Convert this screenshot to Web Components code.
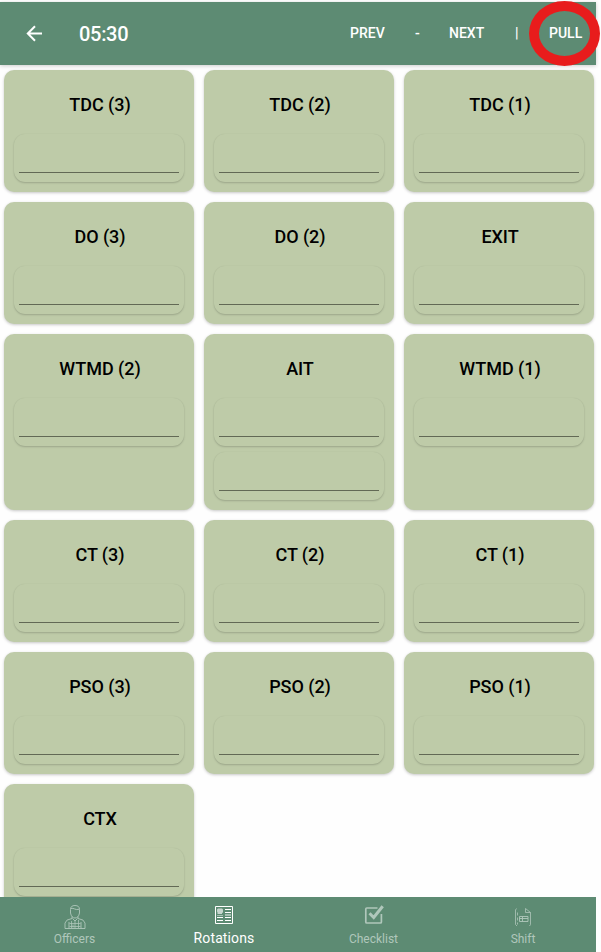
<!DOCTYPE html>
<html lang="en">
<head>
<meta charset="utf-8">
<title>Rotations</title>
<style>
html,body{margin:0;height:100%;overflow:hidden;background:#fefefe;font-family:Roboto,"Liberation Sans",sans-serif}
</style>
</head>
<body>
<rotation-app></rotation-app>
<script>
const define = (name, html, setup) => customElements.define(name, class extends HTMLElement {
  constructor() {
    super();
    this.attachShadow({mode: 'open'}).innerHTML = html;
  }
  connectedCallback() { if (setup) setup(this, this.shadowRoot); }
});

define('app-header', `<style>
:host{display:flex;align-items:center;box-sizing:border-box;height:63px;width:596px;padding-left:24px;background:#5d8b73;color:#fff;box-shadow:0 1px 4px #0003;position:relative;z-index:2;font-weight:500}
.back{width:20px;height:20px;display:block}
.time{font-size:20px;line-height:24px;margin-left:35px;width:271px;padding-top:1px;letter-spacing:-.3px}
nav{display:flex;font-size:14px;line-height:20px;padding-bottom:1px}
.prev{width:65px}.dash{width:34px}.next{width:66px}.bar{width:34px}
.pull{position:relative}
.ring{position:absolute;left:-20px;top:-22px;width:71px;height:65px;box-sizing:border-box;border:10px solid #e81c1c;border-radius:50%}
</style>
<svg class="back" viewBox="0 0 20 20" fill="none" stroke="#fff" stroke-width="2"><path d="M18 9.5H4M11 2.3 3.8 9.5 11 16.7"/></svg>
<span class="time">05:30</span>
<nav><span class="prev">PREV</span><span class="dash">-</span><span class="next">NEXT</span><span class="bar">|</span><span class="pull">PULL<i class="ring"></i></span></nav>`);

define('officer-field', `<style>
:host{display:block;box-sizing:border-box;height:48px;padding:38px 5px 0;border-radius:11px;background:#beCBa8;box-shadow:0 1px 2px #0000002e,0 0 1px #00000010}
div{height:1px;background:#626955}
</style><div></div>`);

define('rotation-card', `<style>
:host{display:flex;flex-direction:column;gap:6px;box-sizing:border-box;padding:0 10px 10px;border-radius:10px;background:#beCBa8;box-shadow:0 1px 3px #00000038}
h2{margin:0 0 -6px;height:64px;box-sizing:border-box;padding:24px 0 0 2px;font-size:18px;line-height:22px;font-weight:500;text-align:center;color:#000;letter-spacing:-.05px}
</style><h2><slot></slot></h2>`, (el, root) => {
  const count = Number(el.getAttribute('fields') || 1);
  for (let i = 0; i < count; i++) root.append(document.createElement('officer-field'));
});

define('rotation-grid', `<style>
:host{display:grid;grid-template-columns:repeat(3,190px);gap:10px;align-content:start;padding:5px 4px;flex:1;min-height:0;overflow:hidden}
</style><slot></slot>`);

const icons = {
  officers: `<path stroke-width=".9" d="M7.5 9V5.5Q7.5 1.5 12 1.5T16.5 5.5V9Q15.5 14 12 14T7.5 9M8 4.5c3-1 4 2 8 .8M9 12.5v2l-5 1.6-2 3V24.5h20V19.100l-2-3-5-1.600v-2M9.500 14.500 12 17l2.500-2.500M6 18v6.500M18 18v6.500"/><path stroke-width="1" opacity=".75" d="M6.500 19.500h11M6.500 22.500h11M8.500 17v7M12 17v7M15.500 16v8M10 20.500v3"/>`,
  rotations: `<path d="M3.500 2.500h17v17h-17z"/><path d="M13 5.500h6M13 8.500h6M5 13.500h6M13 13.500h6M5 16.500h6M13 16.500h6"/><path opacity=".45" d="M13 10.500h6M13 11.500h6M5 11.500h6"/><path opacity=".65" fill="currentColor" stroke="none" d="M6 4.500h4l1 1v3l-1 .5v1H5.500V8.500L5 7.500v-2z"/>`,
  checklist: `<path stroke-width="1.7" d="M15.5 4H4.800Q3.800 4 3.800 5v13q0 1 1 1h13.600q1 0 1-1v-8"/><path stroke-width="3" d="m7.500 9.300 4.200 4.200 9-11.200"/>`,
  shift: `<path stroke-width=".8" d="M6.500 4.500 5.500 6v14.500l1.500 1.500M15.500 4.500l5 4V20.500l-1 1.500M15.500 4.500v4h5"/><path stroke-width=".8" stroke-dasharray="3 2" d="M7.500 8.500v12"/><path stroke-width=".9" d="M9.500 12.500h8.500v5H9.500zM9.500 14.500H18M12.500 12.500v5"/>`
};
define('nav-item', `<style>
:host{display:flex;flex-direction:column;align-items:center;width:150px;flex:none;padding-top:7px;box-sizing:border-box;color:#b0c7bb;font-size:12px;line-height:16px}
:host([active]){color:#fff;font-size:14px}
:host([active]) span{letter-spacing:.13px}
svg{display:block;width:24px;height:24px;margin-bottom:3px;overflow:visible}
:host([icon=shift]) svg{width:26px;padding-right:2px;box-sizing:border-box}
:host([active]) svg{margin-bottom:2px}
</style><svg viewBox="0 0 24 24" fill="none" stroke="currentColor"></svg><span><slot></slot></span>`, (el, root) => {
  root.querySelector('svg').innerHTML = icons[el.getAttribute('icon')];
});
define('bottom-nav', `<style>
:host{display:flex;width:596px;height:55px;background:#5d8b73;overflow:hidden;position:relative;z-index:2;box-sizing:border-box}
::slotted(nav-item){margin-left:-.5px}
</style><slot></slot>`);

const cards = ['TDC (3)','TDC (2)','TDC (1)','DO (3)','DO (2)','EXIT','WTMD (2)','AIT','WTMD (1)','CT (3)','CT (2)','CT (1)','PSO (3)','PSO (2)','PSO (1)','CTX'];
define('rotation-app', `<style>
:host{display:flex;flex-direction:column;height:952px;width:601px;box-sizing:border-box;padding-top:2px;background:#fefefe}
</style>
<app-header></app-header>
<rotation-grid>${cards.map(c => `<rotation-card fields="${c === 'AIT' ? 2 : 1}">${c}</rotation-card>`).join('')}</rotation-grid>
<bottom-nav><nav-item icon="officers">Officers</nav-item><nav-item icon="rotations" active>Rotations</nav-item><nav-item icon="checklist">Checklist</nav-item><nav-item icon="shift">Shift</nav-item></bottom-nav>`);
</script>
</body>
</html>
